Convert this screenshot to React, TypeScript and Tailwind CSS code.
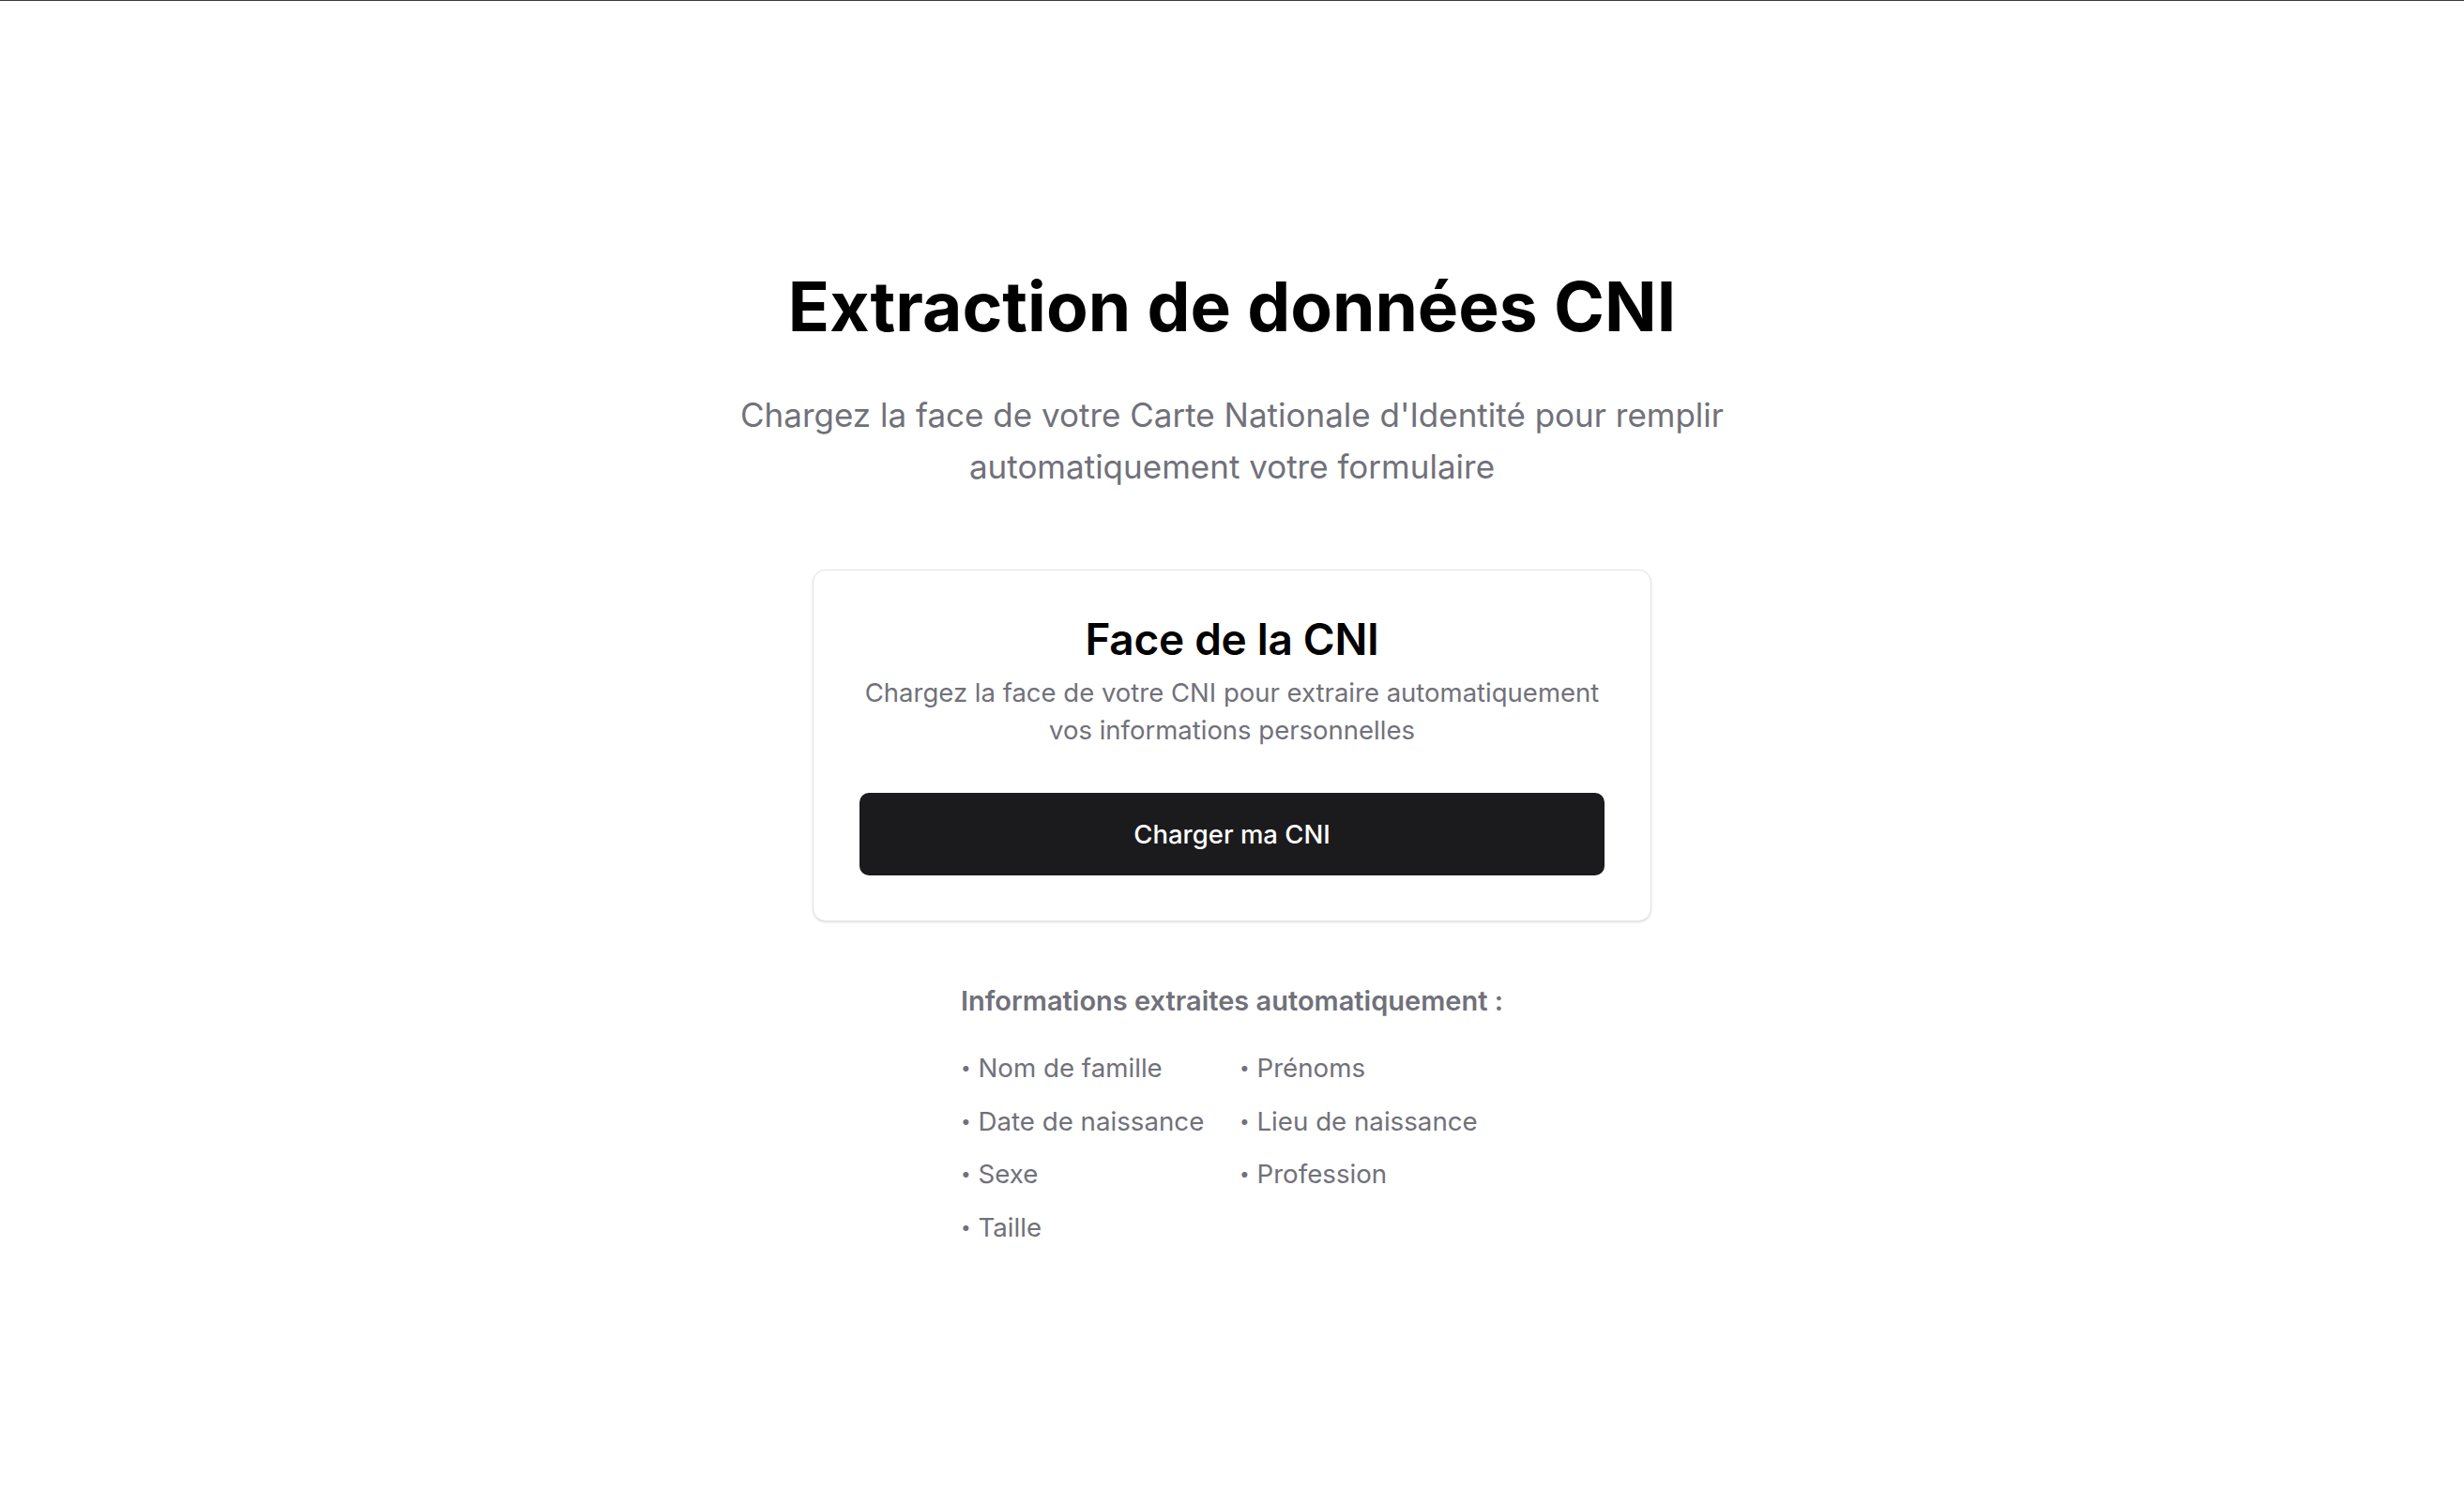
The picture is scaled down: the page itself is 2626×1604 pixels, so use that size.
const champs = [
  "Nom de famille",
  "Prénoms",
  "Date de naissance",
  "Lieu de naissance",
  "Sexe",
  "Profession",
  "Taille",
];

export default function App() {
  return (
    <div
      className="min-h-screen w-full bg-white border-t border-[#3a3a3a] text-[#0a0a0a]"
      style={{ fontFamily: "Inter, 'Noto Sans', sans-serif" }}
    >
      <div className="flex flex-col items-center pt-[289px]">
        {/* en-tête */}
        <h1 className="text-[73px] leading-none font-bold text-black">
          Extraction de données CNI
        </h1>
        <p className="mt-[52px] max-w-[1200px] text-center text-[35px] leading-[55px] text-[#71717a]">
          Chargez la face de votre Carte Nationale d'Identité pour remplir
          <br />
          automatiquement votre formulaire
        </p>

        {/* carte d'upload */}
        <div className="mt-[82px] w-[894px] rounded-[14px] border border-[#e4e4e7] bg-white px-[49px] pt-[50px] pb-[48px] shadow-sm">
          <div className="flex flex-col items-center text-center">
            <h2 className="text-[46px] leading-none font-semibold tracking-[-0.3px] text-black">
              Face de la CNI
            </h2>
            <p className="mt-[14px] text-[27.5px] leading-[40px] text-[#71717a]">
              Chargez la face de votre CNI pour extraire automatiquement
              <br />
              vos informations personnelles
            </p>
          </div>
          <button className="mt-[47px] flex h-[88px] w-full items-center justify-center rounded-[10px] bg-[#1b1b1d] pt-[2px] text-[27.5px] font-medium text-white">
            Charger ma CNI
          </button>
        </div>

        {/* liste des champs */}
        <div className="mt-[65px] w-fit">
          <h3 className="whitespace-nowrap text-[29px] leading-[40px] font-semibold text-[#71717a]">
            Informations extraites automatiquement :
          </h3>
          <ul className="mt-[31px] grid grid-cols-2 gap-x-[16px] gap-y-[16.5px] text-[27.7px] leading-[40px] text-[#71717a]">
            {champs.map((c) => (
              <li key={c}>
                <span className="text-[19px] leading-none align-[3px]">•</span> {c}
              </li>
            ))}
          </ul>
        </div>
      </div>
    </div>
  );
}
